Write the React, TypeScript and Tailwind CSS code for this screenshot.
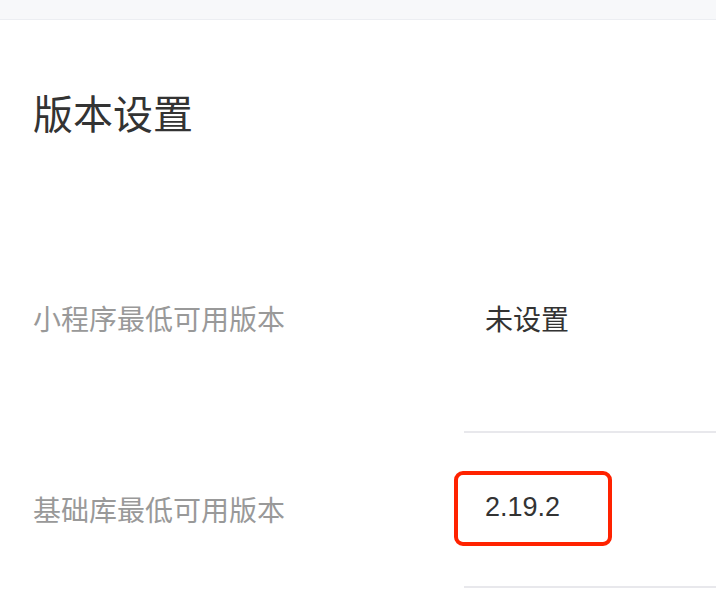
const font = { fontFamily: '"Noto Sans CJK SC", "Noto Sans", sans-serif' }

export default function App() {
  return (
    <div className="min-h-[590px] w-[716px] overflow-hidden bg-white" style={font}>
      {/* top strip */}
      <div className="h-[20px] border-b border-[#eceef2] bg-[#f7f8fa]" />

      <h1 className="mt-[72px] pl-[33px] text-[40px] leading-[40px] font-normal text-[#333]">
        版本设置
      </h1>

      {/* row 1 */}
      <div className="flex">
        <div className="w-[464px] shrink-0 pl-[33px] pt-[172px] text-[28px] leading-[28px] text-[#999]">
          小程序最低可用版本
        </div>
        <div className="flex-1 border-b-2 border-[#e8e8ec] pt-[172px] pb-[99px] pl-[21px] text-[28px] leading-[28px] text-[#333]">
          未设置
        </div>
      </div>

      {/* row 2 */}
      <div className="flex items-center">
        <div className="w-[464px] shrink-0 pb-[4px] pl-[33px] text-[28px] leading-[28px] text-[#999]">
          基础库最低可用版本
        </div>
        <div className="flex-1 border-b-2 border-[#e8e8ec] pt-[38px] pb-[40px]">
          <div className="-ml-[10px] flex h-[75px] w-[158px] items-center rounded-[9px] border-[4px] border-[#ff2200] pl-[27px] pb-[2px] text-[27px] text-[#333]" style={{ fontFamily: '"Liberation Sans", "Noto Sans", sans-serif' }}>
            2.19.2
          </div>
        </div>
      </div>
    </div>
  )
}
